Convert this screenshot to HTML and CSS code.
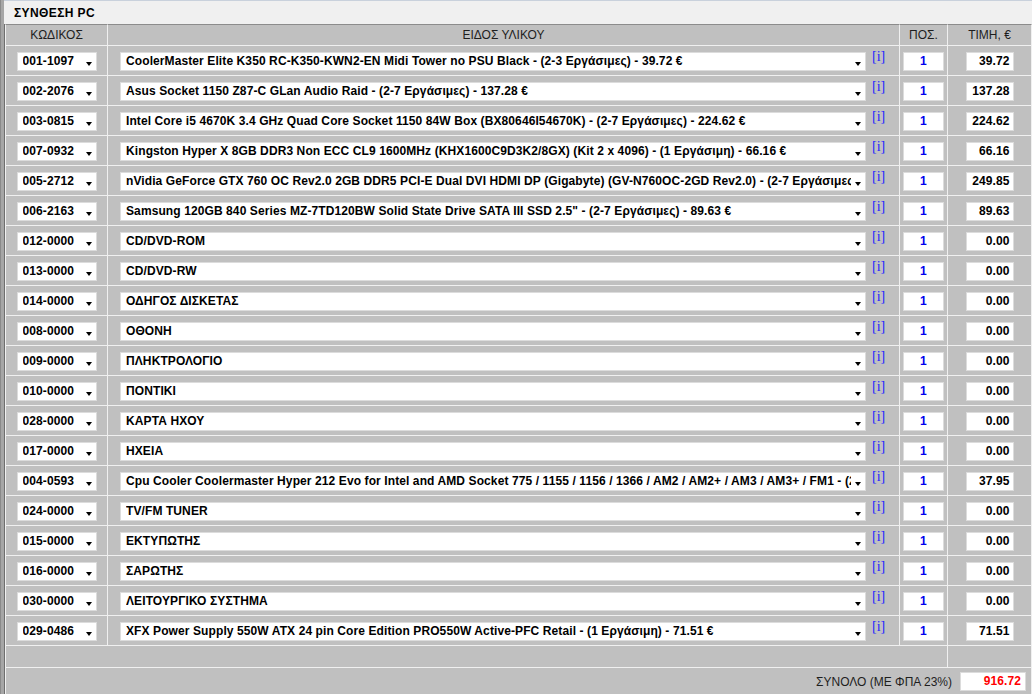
FILE: index.html
```html
<!DOCTYPE html>
<html lang="el">
<head>
    <meta charset="UTF-8">
    <title>Σύνθεση PC</title>
    <link rel="stylesheet" href="styles.css">
</head>
<body>
    <div class="frame">
        <div class="title-bar">ΣΥΝΘΕΣΗ PC</div>
        <table class="build">
            <colgroup>
                <col class="c-code">
                <col class="c-item">
                <col class="c-qty">
                <col class="c-price">
            </colgroup>
            <thead>
                <tr>
                    <th>ΚΩΔΙΚΟΣ</th>
                    <th>ΕΙΔΟΣ ΥΛΙΚΟΥ</th>
                    <th>ΠΟΣ.</th>
                    <th>ΤΙΜΗ, €</th>
                </tr>
            </thead>
            <tbody>
                <tr>
                    <td><div class="combo code"><span class="val">001-1097</span><span class="arrow"></span></div></td>
                    <td><div class="item-cell"><div class="combo item"><span class="val">CoolerMaster Elite K350 RC-K350-KWN2-EN Midi Tower no PSU Black - (2-3 Εργάσιμες) - 39.72 €</span><span class="arrow"></span></div><a class="info" href="#">[i]</a></div></td>
                    <td><div class="box qty">1</div></td>
                    <td><div class="box price">39.72</div></td>
                </tr>
                <tr>
                    <td><div class="combo code"><span class="val">002-2076</span><span class="arrow"></span></div></td>
                    <td><div class="item-cell"><div class="combo item"><span class="val">Asus Socket 1150 Z87-C GLan Audio Raid - (2-7 Εργάσιμες) - 137.28 €</span><span class="arrow"></span></div><a class="info" href="#">[i]</a></div></td>
                    <td><div class="box qty">1</div></td>
                    <td><div class="box price">137.28</div></td>
                </tr>
                <tr>
                    <td><div class="combo code"><span class="val">003-0815</span><span class="arrow"></span></div></td>
                    <td><div class="item-cell"><div class="combo item"><span class="val">Intel Core i5 4670K 3.4 GHz Quad Core Socket 1150 84W Box (BX80646I54670K) - (2-7 Εργάσιμες) - 224.62 €</span><span class="arrow"></span></div><a class="info" href="#">[i]</a></div></td>
                    <td><div class="box qty">1</div></td>
                    <td><div class="box price">224.62</div></td>
                </tr>
                <tr>
                    <td><div class="combo code"><span class="val">007-0932</span><span class="arrow"></span></div></td>
                    <td><div class="item-cell"><div class="combo item"><span class="val">Kingston Hyper X 8GB DDR3 Non ECC CL9 1600MHz (KHX1600C9D3K2/8GX) (Kit 2 x 4096) - (1 Εργάσιμη) - 66.16 €</span><span class="arrow"></span></div><a class="info" href="#">[i]</a></div></td>
                    <td><div class="box qty">1</div></td>
                    <td><div class="box price">66.16</div></td>
                </tr>
                <tr>
                    <td><div class="combo code"><span class="val">005-2712</span><span class="arrow"></span></div></td>
                    <td><div class="item-cell"><div class="combo item"><span class="val">nVidia GeForce GTX 760 OC Rev2.0 2GB DDR5 PCI-E Dual DVI HDMI DP (Gigabyte) (GV-N760OC-2GD Rev2.0) - (2-7 Εργάσιμες) - 249.85 €</span><span class="arrow"></span></div><a class="info" href="#">[i]</a></div></td>
                    <td><div class="box qty">1</div></td>
                    <td><div class="box price">249.85</div></td>
                </tr>
                <tr>
                    <td><div class="combo code"><span class="val">006-2163</span><span class="arrow"></span></div></td>
                    <td><div class="item-cell"><div class="combo item"><span class="val">Samsung 120GB 840 Series MZ-7TD120BW Solid State Drive SATA III SSD 2.5" - (2-7 Εργάσιμες) - 89.63 €</span><span class="arrow"></span></div><a class="info" href="#">[i]</a></div></td>
                    <td><div class="box qty">1</div></td>
                    <td><div class="box price">89.63</div></td>
                </tr>
                <tr>
                    <td><div class="combo code"><span class="val">012-0000</span><span class="arrow"></span></div></td>
                    <td><div class="item-cell"><div class="combo item"><span class="val">CD/DVD-ROM</span><span class="arrow"></span></div><a class="info" href="#">[i]</a></div></td>
                    <td><div class="box qty">1</div></td>
                    <td><div class="box price">0.00</div></td>
                </tr>
                <tr>
                    <td><div class="combo code"><span class="val">013-0000</span><span class="arrow"></span></div></td>
                    <td><div class="item-cell"><div class="combo item"><span class="val">CD/DVD-RW</span><span class="arrow"></span></div><a class="info" href="#">[i]</a></div></td>
                    <td><div class="box qty">1</div></td>
                    <td><div class="box price">0.00</div></td>
                </tr>
                <tr>
                    <td><div class="combo code"><span class="val">014-0000</span><span class="arrow"></span></div></td>
                    <td><div class="item-cell"><div class="combo item"><span class="val">ΟΔΗΓΟΣ ΔΙΣΚΕΤΑΣ</span><span class="arrow"></span></div><a class="info" href="#">[i]</a></div></td>
                    <td><div class="box qty">1</div></td>
                    <td><div class="box price">0.00</div></td>
                </tr>
                <tr>
                    <td><div class="combo code"><span class="val">008-0000</span><span class="arrow"></span></div></td>
                    <td><div class="item-cell"><div class="combo item"><span class="val">ΟΘΟΝΗ</span><span class="arrow"></span></div><a class="info" href="#">[i]</a></div></td>
                    <td><div class="box qty">1</div></td>
                    <td><div class="box price">0.00</div></td>
                </tr>
                <tr>
                    <td><div class="combo code"><span class="val">009-0000</span><span class="arrow"></span></div></td>
                    <td><div class="item-cell"><div class="combo item"><span class="val">ΠΛΗΚΤΡΟΛΟΓΙΟ</span><span class="arrow"></span></div><a class="info" href="#">[i]</a></div></td>
                    <td><div class="box qty">1</div></td>
                    <td><div class="box price">0.00</div></td>
                </tr>
                <tr>
                    <td><div class="combo code"><span class="val">010-0000</span><span class="arrow"></span></div></td>
                    <td><div class="item-cell"><div class="combo item"><span class="val">ΠΟΝΤΙΚΙ</span><span class="arrow"></span></div><a class="info" href="#">[i]</a></div></td>
                    <td><div class="box qty">1</div></td>
                    <td><div class="box price">0.00</div></td>
                </tr>
                <tr>
                    <td><div class="combo code"><span class="val">028-0000</span><span class="arrow"></span></div></td>
                    <td><div class="item-cell"><div class="combo item"><span class="val">ΚΑΡΤΑ ΗΧΟΥ</span><span class="arrow"></span></div><a class="info" href="#">[i]</a></div></td>
                    <td><div class="box qty">1</div></td>
                    <td><div class="box price">0.00</div></td>
                </tr>
                <tr>
                    <td><div class="combo code"><span class="val">017-0000</span><span class="arrow"></span></div></td>
                    <td><div class="item-cell"><div class="combo item"><span class="val">ΗΧΕΙΑ</span><span class="arrow"></span></div><a class="info" href="#">[i]</a></div></td>
                    <td><div class="box qty">1</div></td>
                    <td><div class="box price">0.00</div></td>
                </tr>
                <tr>
                    <td><div class="combo code"><span class="val">004-0593</span><span class="arrow"></span></div></td>
                    <td><div class="item-cell"><div class="combo item"><span class="val">Cpu Cooler Coolermaster Hyper 212 Evo for Intel and AMD Socket 775 / 1155 / 1156 / 1366 / AM2 / AM2+ / AM3 / AM3+ / FM1 - (2-7 Εργάσιμες) - 37.95 €</span><span class="arrow"></span></div><a class="info" href="#">[i]</a></div></td>
                    <td><div class="box qty">1</div></td>
                    <td><div class="box price">37.95</div></td>
                </tr>
                <tr>
                    <td><div class="combo code"><span class="val">024-0000</span><span class="arrow"></span></div></td>
                    <td><div class="item-cell"><div class="combo item"><span class="val">TV/FM TUNER</span><span class="arrow"></span></div><a class="info" href="#">[i]</a></div></td>
                    <td><div class="box qty">1</div></td>
                    <td><div class="box price">0.00</div></td>
                </tr>
                <tr>
                    <td><div class="combo code"><span class="val">015-0000</span><span class="arrow"></span></div></td>
                    <td><div class="item-cell"><div class="combo item"><span class="val">ΕΚΤΥΠΩΤΗΣ</span><span class="arrow"></span></div><a class="info" href="#">[i]</a></div></td>
                    <td><div class="box qty">1</div></td>
                    <td><div class="box price">0.00</div></td>
                </tr>
                <tr>
                    <td><div class="combo code"><span class="val">016-0000</span><span class="arrow"></span></div></td>
                    <td><div class="item-cell"><div class="combo item"><span class="val">ΣΑΡΩΤΗΣ</span><span class="arrow"></span></div><a class="info" href="#">[i]</a></div></td>
                    <td><div class="box qty">1</div></td>
                    <td><div class="box price">0.00</div></td>
                </tr>
                <tr>
                    <td><div class="combo code"><span class="val">030-0000</span><span class="arrow"></span></div></td>
                    <td><div class="item-cell"><div class="combo item"><span class="val">ΛΕΙΤΟΥΡΓΙΚΟ ΣΥΣΤΗΜΑ</span><span class="arrow"></span></div><a class="info" href="#">[i]</a></div></td>
                    <td><div class="box qty">1</div></td>
                    <td><div class="box price">0.00</div></td>
                </tr>
                <tr>
                    <td><div class="combo code"><span class="val">029-0486</span><span class="arrow"></span></div></td>
                    <td><div class="item-cell"><div class="combo item"><span class="val">XFX Power Supply 550W ATX 24 pin Core Edition PRO550W Active-PFC Retail - (1 Εργάσιμη) - 71.51 €</span><span class="arrow"></span></div><a class="info" href="#">[i]</a></div></td>
                    <td><div class="box qty">1</div></td>
                    <td><div class="box price">71.51</div></td>
                </tr>
            </tbody>
            <tfoot>
                <tr class="spacer">
                    <td colspan="3"></td>
                    <td></td>
                </tr>
                <tr class="total">
                    <td colspan="4">
                        <div class="total-line">
                            <span class="total-label">ΣΥΝΟΛΟ (ΜΕ ΦΠΑ 23%)</span>
                            <div class="box total-value">916.72</div>
                        </div>
                    </td>
                </tr>
            </tfoot>
        </table>
    </div>
</body>
</html>
```

FILE: styles.css
```css
* {
    margin: 0;
    padding: 0;
    box-sizing: border-box;
}
body {
    font-family: "Liberation Sans", Arial, sans-serif;
    font-size: 12px;
    color: #000;
    background: #c0c0c0;
    border-left: 1px solid #8a8a8a;
    min-height: 100vh;
    overflow: hidden;
}
.frame {
    border-left: 3px solid #a6a6a6;
    min-height: 100vh;
}
.title-bar {
    height: 24px;
    background: #f0f0f0;
    border-top: 1px solid #c9d1dc;
    padding: 4px 0 0 10px;
    font-weight: bold;
    font-size: 12px;
    letter-spacing: 0.4px;
    line-height: 16px;
}
.build {
    border-collapse: separate;
    border-spacing: 0;
    table-layout: fixed;
    width: 1027px;
    border-left: 1px solid #6e6e6e;
}
.build tr > * {
    border-right: 1px solid #f0f0f0;
    border-bottom: 1px solid #f0f0f0;
}
.build tr > *:first-child {
    border-left: 1px solid #f0f0f0;
}
.build thead th {
    border-top: 1px solid #8c8c8c;
    height: 22px;
    font-weight: normal;
    font-size: 12px;
    color: #1e1e1e;
    text-align: center;
    vertical-align: middle;
}
.c-code { width: 103px; }
.c-item { width: 792px; }
.c-qty { width: 48px; }
.c-price { width: 84px; }
.build tbody td {
    height: 30px;
    padding-top: 6px;
    vertical-align: top;
}
.combo, .box {
    height: 19px;
    background: #fff;
    border: 1px solid #dcdcdc;
    font-weight: bold;
    font-size: 12px;
    letter-spacing: 0.1px;
    line-height: 17px;
}
.combo {
    display: flex;
    align-items: center;
    padding: 0 4px 0 5px;
}
.combo .val {
    flex: 1;
    overflow: hidden;
    white-space: nowrap;
}
.arrow {
    width: 0;
    height: 0;
    margin: 4px 0 0 4px;
    border-top: 4px solid #000;
    border-left: 3.5px solid transparent;
    border-right: 3.5px solid transparent;
}
.code {
    width: 80px;
    margin: 0 auto;
}
.item-cell {
    display: flex;
    align-items: flex-start;
    padding-left: 12px;
}
.item {
    width: 746px;
}
.info {
    margin: -3px 0 0 6px;
    font-family: "Liberation Serif", "Times New Roman", serif;
    font-size: 14px;
    line-height: 16px;
    color: #2424ff;
    text-decoration: none;
}
.qty {
    width: 41px;
    margin: 0 auto;
    text-align: center;
    color: #0000ee;
}
.price {
    width: 48px;
    margin: 0 auto;
    text-align: right;
    padding-right: 3px;
}
.spacer td {
    height: 22px;
}
.total td {
    border-bottom: none;
    height: 27px;
    vertical-align: middle;
}
.total-line {
    display: flex;
    align-items: center;
    justify-content: flex-end;
    padding-right: 5px;
}
.total-label {
    font-size: 12px;
    color: #1e1e1e;
    margin-right: 8px;
}
.total-value {
    width: 66px;
    color: #ff0000;
    text-align: right;
    padding-right: 4px;
}
```
